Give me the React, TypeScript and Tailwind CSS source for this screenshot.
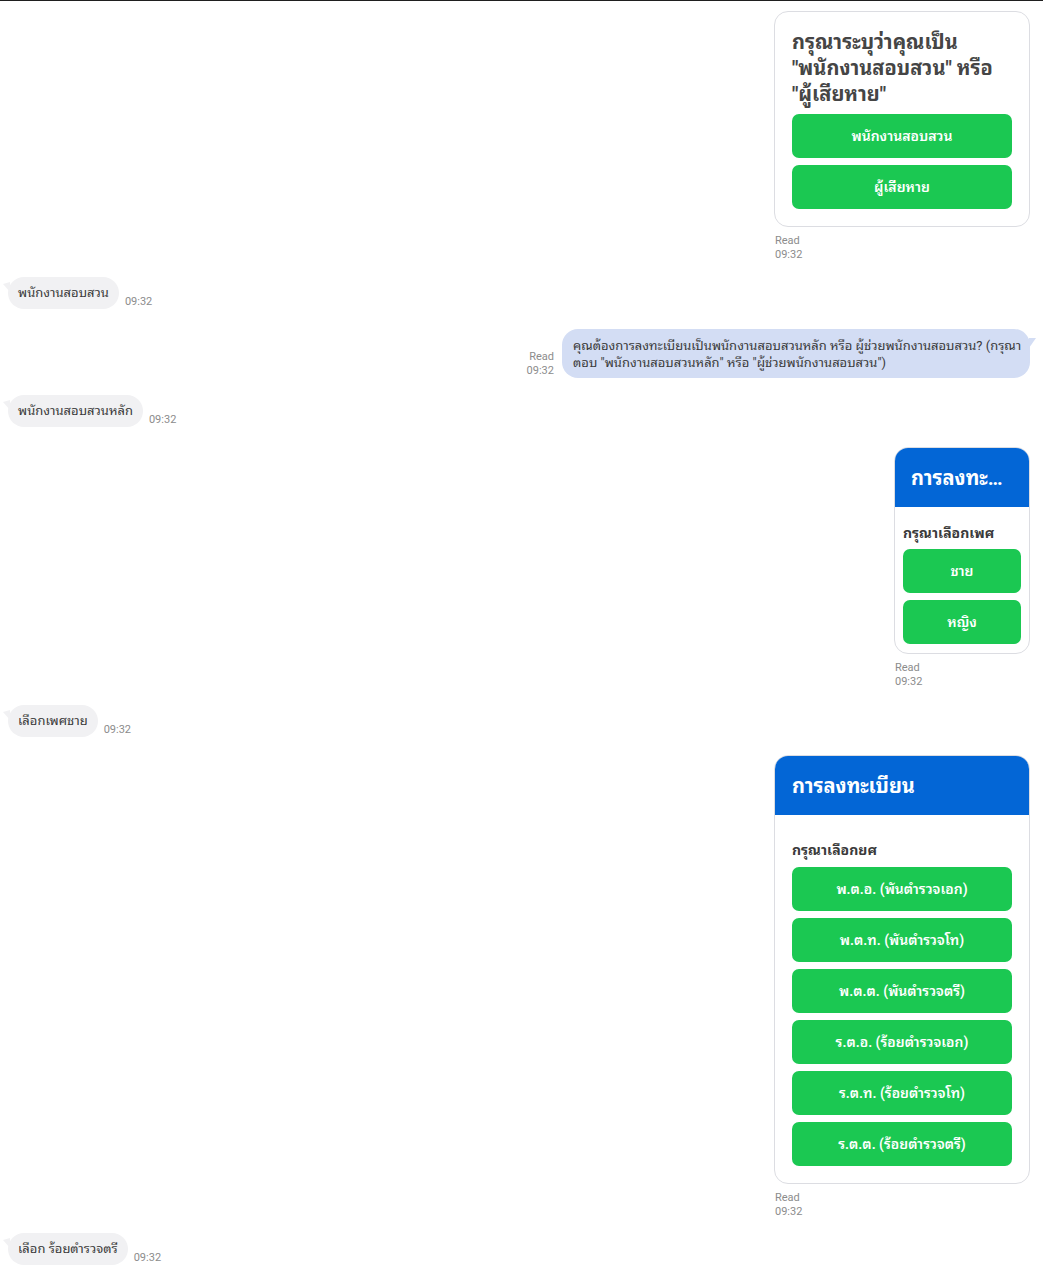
import { ReactNode } from 'react';

const ranks = [
  'พ.ต.อ. (พันตำรวจเอก)',
  'พ.ต.ท. (พันตำรวจโท)',
  'พ.ต.ต. (พันตำรวจตรี)',
  'ร.ต.อ. (ร้อยตำรวจเอก)',
  'ร.ต.ท. (ร้อยตำรวจโท)',
  'ร.ต.ต. (ร้อยตำรวจตรี)',
];

function ChoiceButton({ label }: { label: string }) {
  return (
    <button className="h-11 w-full rounded-[7px] bg-[#1bc852] text-[14px] font-semibold text-white">
      {label}
    </button>
  );
}

function ReadMark({ align = 'left' }: { align?: 'left' | 'right' }) {
  return (
    <div className={align === 'right' ? 'text-right' : 'pl-px'}>
      <p className="text-[11px] leading-[14px] text-[#8c8c8c]">Read</p>
      <p className="text-[11px] leading-[14px] text-[#8c8c8c]">09:32</p>
    </div>
  );
}

// flex card sent by the bot, "Read" stamp underneath
function BotCard({ width, children }: { width: string; children: ReactNode }) {
  return (
    <div className="flex justify-end">
      <div className={width}>
        <div className="overflow-hidden rounded-[14px] border border-[#dcdde2] bg-white">{children}</div>
        <div className="mt-[7px]">
          <ReadMark />
        </div>
      </div>
    </div>
  );
}

function UserBubble({ text, className }: { text: string; className?: string }) {
  return (
    <div className={`flex items-end gap-1.5 ${className ?? ''}`}>
      <div className="relative flex h-8 items-center rounded-2xl bg-[#f1f1f3] px-[10px] text-[13px] text-[#3a3a3a]">
        <svg className="absolute -left-[5px] top-[5px]" width="7" height="10" viewBox="0 0 7 10">
          <polygon points="0,2 7,0 7,10" fill="#f1f1f3" />
        </svg>
        {text}
      </div>
      <span className="text-[11px] leading-[14px] text-[#8c8c8c]">09:32</span>
    </div>
  );
}

export default function App() {
  return (
    <div className="min-h-screen border-t border-[#1f1f1f] bg-white font-['Roboto','Noto_Sans_Thai_Looped',sans-serif]">
      <div className="flex flex-col pl-2 pr-[13px] pt-[10px]">
        <BotCard width="w-[256px]">
          <div className="p-[17px]">
            <h2 className="text-[20px] font-bold leading-[26px] text-[#454545]">
              กรุณาระบุว่าคุณเป็น "พนักงานสอบสวน" หรือ "ผู้เสียหาย"
            </h2>
            <div className="mt-[7px] flex flex-col gap-[7px]">
              <ChoiceButton label="พนักงานสอบสวน" />
              <ChoiceButton label="ผู้เสียหาย" />
            </div>
          </div>
        </BotCard>

        <UserBubble text="พนักงานสอบสวน" className="mt-[15px]" />

        <div className="mt-5 flex items-end justify-end gap-2">
          <ReadMark align="right" />
          <div className="relative h-[49px] w-[468px] rounded-2xl bg-[#d3ddf4] px-[11px] pt-2 text-[13px] leading-[17px] text-[#3a3a3a]">
            <svg className="absolute -right-[6px] top-[9px]" width="7" height="10" viewBox="0 0 7 10">
              <polygon points="0,0 7,0 0,10" fill="#d3ddf4" />
            </svg>
            <p className="whitespace-nowrap">คุณต้องการลงทะเบียนเป็นพนักงานสอบสวนหลัก หรือ ผู้ช่วยพนักงานสอบสวน? (กรุณา</p>
            <p className="whitespace-nowrap">ตอบ "พนักงานสอบสวนหลัก" หรือ "ผู้ช่วยพนักงานสอบสวน")</p>
          </div>
        </div>

        <UserBubble text="พนักงานสอบสวนหลัก" className="mt-[17px]" />

        <div className="mt-5">
          <BotCard width="w-[136px]">
            <div className="flex h-[59px] items-center bg-[#0366d6] pl-4 pr-5">
              <h2 className="truncate text-[20px] font-bold text-white">การลงทะเบียน</h2>
            </div>
            <div className="px-2 pb-[9px] pt-4">
              <p className="text-[14px] font-bold leading-5 text-[#3a3a3a]">กรุณาเลือกเพศ</p>
              <div className="mt-[6px] flex flex-col gap-[7px]">
                <ChoiceButton label="ชาย" />
                <ChoiceButton label="หญิง" />
              </div>
            </div>
          </BotCard>
        </div>

        <UserBubble text="เลือกเพศชาย" className="mt-4" />

        <div className="mt-[18px]">
          <BotCard width="w-[256px]">
            <div className="flex h-[59px] items-center bg-[#0366d6] px-[17px]">
              <h2 className="text-[20px] font-bold text-white">การลงทะเบียน</h2>
            </div>
            <div className="px-[17px] pb-[17px] pt-[25px]">
              <p className="text-[14px] font-bold leading-5 text-[#3a3a3a]">กรุณาเลือกยศ</p>
              <div className="mt-[7px] flex flex-col gap-[7px]">
                {ranks.map((r) => (
                  <ChoiceButton key={r} label={r} />
                ))}
              </div>
            </div>
          </BotCard>
        </div>

        <UserBubble text="เลือก ร้อยตำรวจตรี" className="mt-[14px] mb-2" />
      </div>
    </div>
  );
}
